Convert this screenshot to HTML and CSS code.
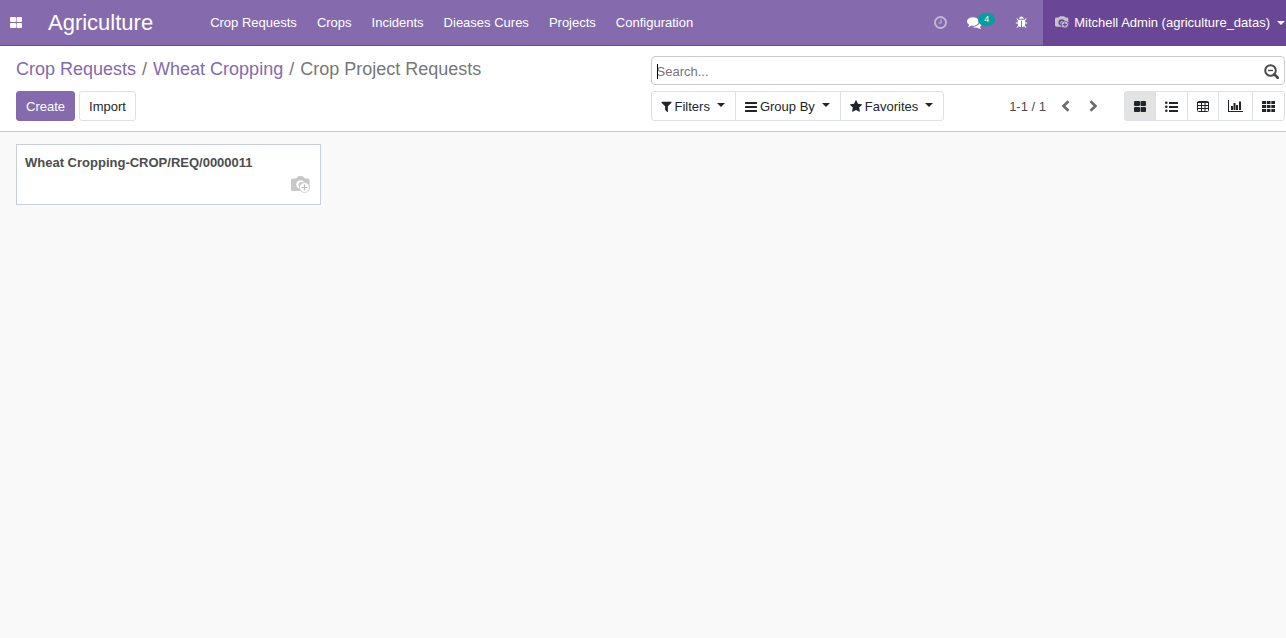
FILE: index.html
```html
<!DOCTYPE html>
<html lang="en">
<head>
<meta charset="utf-8">
<meta name="viewport" content="width=device-width, initial-scale=1">
<title>Crop Project Requests</title>
<link rel="stylesheet" href="styles.css">
</head>
<body>
<header class="navbar">
  <button class="apps" type="button" aria-label="Applications">
    <svg class="icon" width="12" height="11" viewBox="0 0 12 11"><path d="M1 0h4q1 0 1 1v3q0 1-1 1H1Q0 5 0 4V1Q0 0 1 0zM7.500 0H11q1 0 1 1v3q0 1-1 1H7.500q-1 0-1-1V1q0-1 1-1zM1 6h4q1 0 1 1v3q0 1-1 1H1q-1 0-1-1V7q0-1 1-1zM7.500 6H11q1 0 1 1v3q0 1-1 1H7.500q-1 0-1-1V7q0-1 1-1z"/></svg>
  </button>
  <a class="brand" href="#">Agriculture</a>
  <nav class="menu">
    <a href="#">Crop Requests</a>
    <a href="#">Crops</a>
    <a href="#">Incidents</a>
    <a href="#">Dieases Cures</a>
    <a href="#">Projects</a>
    <a href="#">Configuration</a>
  </nav>
  <div class="systray">
    <button class="tray tray-muted" type="button" aria-label="Activities">
      <svg class="icon" width="15" height="15" viewBox="0 0 1792 1792"><path d="M1024 544v448q0 14-9 23t-23 9h-320q-14 0-23-9t-9-23v-64q0-14 9-23t23-9h224v-352q0-14 9-23t23-9h64q14 0 23 9t9 23zm416 352q0-148-73-273t-198-198-273-73-273 73-198 198-73 273 73 273 198 198 273 73 273-73 198-198 73-273zm224 0q0 209-103 385.500t-279.500 279.500-385.500 103-385.500-103-279.500-279.500-103-385.500 103-385.500 279.500-279.500 385.500-103 385.500 103 279.500 279.500 103 385.500z"/></svg>
    </button>
    <button class="tray tray-messages" type="button" aria-label="Messages">
      <svg class="icon" width="15" height="15" viewBox="0 0 1792 1792"><path d="M1408 768q0 139-94 257t-256.500 186.500-353.500 68.500q-86 0-176-16-124 88-278 128-36 9-86 16h-3q-11 0-20.500-8t-11.500-21q-1-3-1-6.500t.5-6.500 2-6l2.500-5 3.500-5.500 4-5 4.500-5 4-4.500q5-6 23-25t26-29.500 22.500-29 25-38.500 20.500-44q-124-72-195-177t-71-224q0-139 94-257t256.500-186.500 353.500-68.500 353.500 68.500 256.500 186.500 94 257zm384 256q0 120-71 224.500t-195 176.500q10 24 20.500 44t25 38.500 22.500 29 26 29.500 23 25q1 1 4 4.500t4.500 5 4 5 3.500 5.500l2.500 5 2 6 .5 6.500-1 6.500q-3 14-13 22t-22 7q-50-7-86-16-154-40-278-128-90 16-176 16-271 0-472-132 58 4 88 4 161 0 309-45t264-129q125-92 192-212t67-254q0-77-23-152 129 71 204 178t75 230z"/></svg>
      <span class="badge">4</span>
    </button>
    <button class="tray" type="button" aria-label="Debug tools">
      <svg class="icon" width="13" height="13" viewBox="0 0 1792 1792"><path d="M1696 960q0 26-19 45t-45 19h-224q0 171-67 290l208 209q19 19 19 45t-19 45q-18 19-45 19t-45-19l-198-197q-5 5-15 13t-42 28.500-65 36.500-82 29-97 13v-896h-128v896q-51 0-101.500-13.500t-87-33-66-39-43.500-32.500l-15-14-183 207q-20 21-48 21-24 0-43-16-19-18-20.500-44.500t15.500-46.500l202-227q-58-114-58-274h-224q-26 0-45-19t-19-45 19-45 45-19h224v-294l-173-173q-19-19-19-45t19-45 45-19 45 19l173 173h844l173-173q19-19 45-19t45 19 19 45-19 45l-173 173v294h224q26 0 45 19t19 45zm-480-576h-640q0-133 93.500-226.500t226.500-93.500 226.500 93.500 93.500 226.500z"/></svg>
    </button>
    <button class="user" type="button">
      <svg class="avatar" width="14" height="13" viewBox="0 0 20 18"><path fill="#c6c2cc" d="M2 2h3l1.500-1.500q.5-.5 2-.5h3q1.500 0 2 .5L15 2h2q2 0 2 2v9q0 2-2 2H2q-2 0-2-2V4q0-2 2-2z"/><circle cx="9.500" cy="9" r="4.500" fill="#6a4796"/><circle cx="10" cy="9.500" r="2.500" fill="#c6c2cc"/><circle cx="14" cy="12" r="5" fill="#c6c2cc" stroke="#6a4796"/><path d="M14 9v6M11 12h6" stroke="#6a4796" stroke-width="1.500"/></svg>
      <span>Mitchell Admin (agriculture_datas)</span>
      <span class="caret"></span>
    </button>
  </div>
</header>

<section class="control-panel">
  <div class="panel-left">
    <nav class="breadcrumb" aria-label="Breadcrumb">
      <a href="#">Crop Requests</a><span class="slash">/</span><a href="#">Wheat Cropping</a><span class="slash">/</span><span>Crop Project Requests</span>
    </nav>
    <div class="actions">
      <button class="btn btn-primary" type="button">Create</button>
      <button class="btn" type="button">Import</button>
    </div>
  </div>
  <div class="panel-right">
    <div class="search">
      <input class="search-input" type="text" placeholder="Search..." aria-label="Search" autofocus>
      <span class="text-cursor"></span>
      <button class="search-toggle" type="button" aria-label="Advanced search">
        <svg width="15" height="15" viewBox="0 0 15 15" fill="none" stroke="currentColor" stroke-width="2"><circle cx="6.500" cy="6.500" r="5.300"/><path d="M10.300 10.300l3.400 3.400" stroke-width="2.700" stroke-linecap="round"/><path d="M4 6.500h5" stroke-width="1.400"/></svg>
      </button>
    </div>
    <div class="tools">
      <div class="group">
        <button class="btn btn-filter" type="button"><svg class="icon" width="11" height="13" viewBox="192 0 1408 1792"><path d="M1595 295q17 41-14 70l-493 493v742q0 42-39 59-13 5-25 5-27 0-45-19l-256-256q-19-19-19-45v-486l-493-493q-31-29-14-70 17-39 59-39h1280q42 0 59 39z"/></svg>Filters<span class="caret"></span></button>
        <button class="btn btn-filter" type="button"><svg class="icon" width="12" height="10" viewBox="0 0 12 10"><path d="M.5 0h11q.5 0 .5.500v1q0 .5-.5.500H.500Q0 2 0 1.500v-1Q0 0 .5 0zM.5 4h11q.5 0 .5.500v1q0 .5-.5.500H.500Q0 6 0 5.500v-1Q0 4 .5 4zM.5 8h11q.5 0 .5.500v1q0 .5-.5.500H.500Q0 10 0 9.500v-1Q0 8 .5 8z"/></svg>Group By<span class="caret"></span></button>
        <button class="btn btn-filter" type="button"><svg class="icon" width="12" height="13" viewBox="64 0 1664 1792"><path d="M1728 647q0 22-26 48l-363 354 86 500q1 7 1 20 0 21-10.500 35.500t-30.500 14.500q-19 0-40-12l-449-236-449 236q-22 12-40 12-21 0-31.500-14.500t-10.500-35.500q0-6 2-20l86-500-364-354q-25-27-25-48 0-37 56-46l502-73 225-455q19-41 49-41t49 41l225 455 502 73q56 9 56 46z"/></svg>Favorites<span class="caret"></span></button>
      </div>
      <div class="view-tools">
        <div class="pager">
          <span>1-1 / 1</span>
          <button class="pager-btn" type="button" aria-label="Previous"><svg width="9" height="12" viewBox="0 0 9 12"><path d="M7.500 1.200L2.500 6l5 4.800"/></svg></button>
          <button class="pager-btn" type="button" aria-label="Next"><svg width="9" height="12" viewBox="0 0 9 12"><path d="M1.500 1.200L6.500 6l-5 4.800"/></svg></button>
        </div>
        <div class="group">
          <button class="btn btn-view active" type="button" aria-label="Kanban"><svg class="icon" width="12" height="11" viewBox="0 0 12 11"><path d="M1 0h4q1 0 1 1v3q0 1-1 1H1Q0 5 0 4V1Q0 0 1 0zM7.500 0H11q1 0 1 1v3q0 1-1 1H7.500q-1 0-1-1V1q0-1 1-1zM1 6h4q1 0 1 1v3q0 1-1 1H1q-1 0-1-1V7q0-1 1-1zM7.500 6H11q1 0 1 1v3q0 1-1 1H7.500q-1 0-1-1V7q0-1 1-1z"/></svg></button>
          <button class="btn btn-view" type="button" aria-label="List"><svg class="icon" width="13" height="11" viewBox="0 0 13 11"><path d="M4 1h9v2H4zM4 5h9v2H4zM4 9h9v2H4z"/><circle cx="1.300" cy="1.700" r="1.300"/><circle cx="1.300" cy="5.700" r="1.300"/><circle cx="1.300" cy="9.700" r="1.300"/></svg></button>
          <button class="btn btn-view" type="button" aria-label="Pivot"><svg width="12" height="11" viewBox="0 0 12 11" fill="none" stroke="currentColor"><rect x=".5" y=".5" width="11" height="10" rx="1"/><path d="M0 1.500h12M0 4.500h12M0 7.500h12M4.500 1v10M8 1v10"/></svg></button>
          <button class="btn btn-view" type="button" aria-label="Graph"><svg class="icon" width="15" height="12" viewBox="0 0 15 12"><path d="M0 0h1v11h14v1H0zM3 6h2v4H3zM5.500 3h2v7h-2zM8 5h2v5H8zM11 1.500h2V10h-2z"/></svg></button>
          <button class="btn btn-view" type="button" aria-label="Cards"><svg class="icon" width="13" height="11" viewBox="0 0 13 11"><path d="M.5 0H4v3H0V.5zM4.800 0h3.700v3H4.800zM9.300 0H13v3H9.300zM0 4h4v3H0zM4.800 4h3.700v3H4.800zM9.300 4H13v3H9.300zM0 8h4v3H0zM4.800 8h3.700v3H4.800zM9.300 8H13v3H9.300z"/></svg></button>
        </div>
      </div>
    </div>
  </div>
</section>

<main class="kanban">
  <article class="card">
    <strong class="card-title">Wheat Cropping-CROP/REQ/0000011</strong>
    <svg class="card-image" width="20" height="18" viewBox="0 0 20 18"><path fill="#c8c8c8" d="M1.500 2.500H5L6.500 1q.8-1 2-1h2q1.200 0 2 1L14 2.500h3q1.500 0 1.500 1.500v9.500q0 1.500-1.500 1.500H1.500Q0 15 0 13.500V4q0-1.500 1.500-1.500z"/><circle cx="9.500" cy="8.500" r="4.200" fill="#fff"/><circle cx="10.500" cy="9" r="3" fill="#c8c8c8"/><circle cx="13.500" cy="11.500" r="5" fill="#fff" stroke="#c8c8c8" stroke-width=".8"/><path d="M13.500 8.500v6M10.500 11.500h6" stroke="#bbb" stroke-width="1.200"/></svg>
  </article>
</main>
</body>
</html>
```
FILE: styles.css
```css
* {
  box-sizing: border-box;
}

body {
  margin: 0;
  min-height: 100vh;
  background: #f9f9f9;
  color: #4c4c4c;
  font: 13px/20px "Liberation Sans", Arial, sans-serif;
}

a {
  color: #8569ae;
  text-decoration: none;
}

button {
  padding: 0;
  border: 0;
  background: none;
  color: inherit;
  font: inherit;
  cursor: pointer;
}

svg {
  display: block;
  flex: none;
}

.icon {
  fill: currentColor;
}

.caret {
  border: 4px solid transparent;
  border-top-color: currentColor;
  border-bottom: 0;
}

.navbar {
  display: flex;
  align-items: stretch;
  height: 46px;
  border-bottom: 1px solid #6a4796;
  background: #856bae;
  color: #fff;
}

.navbar a {
  color: #fff;
}

.apps {
  padding: 0 10px 1px;
}

.brand {
  align-self: center;
  margin: 0 47px 0 16px;
  font-size: 22px;
  line-height: 30px;
}

.menu {
  display: flex;
  align-items: center;
}

.menu a {
  padding: 0 10px;
}

.systray {
  display: flex;
  margin-left: auto;
}

.tray {
  display: flex;
  align-items: center;
  padding: 0 15px 0 12px;
}

.tray-muted {
  padding: 0 11px 0 12px;
  opacity: 0.5;
}

.tray-messages {
  padding: 0 8px;
}

.badge {
  margin: -6px 0 0 -4px;
  padding: 0 6px;
  border-radius: 7px;
  background: #00a09d;
  font-size: 9px;
  line-height: 13px;
}

.user {
  display: flex;
  align-items: center;
  gap: 5px;
  margin-bottom: -1px;
  padding: 0 1px 1px 12px;
  background: #6a4796;
}

.user .caret {
  margin-left: 2px;
}

.control-panel {
  display: grid;
  grid-template-columns: 1fr 1fr;
  padding: 10px 1px 10px 16px;
  border-bottom: 1px solid #ccc;
  background: #fff;
}

.panel-left,
.panel-right {
  display: flex;
  flex-direction: column;
  gap: 6px;
}

.breadcrumb {
  height: 29px;
  color: #777;
  font-size: 18px;
  line-height: 26px;
}

.slash {
  padding: 0 6px;
}

.actions {
  display: flex;
  gap: 4px;
}

.btn {
  display: flex;
  align-items: center;
  justify-content: center;
  height: 30px;
  padding: 1px 9px 0;
  border: 1px solid #dee0e8;
  border-radius: 3px;
  background: #fff;
  color: #212529;
}

.btn-primary {
  border-color: #856bae;
  background: #856bae;
  color: #fff;
}

.search {
  position: relative;
  display: flex;
  height: 29px;
  border: 1px solid #ccc;
  border-radius: 4px;
}

.search-input {
  flex: 1;
  min-width: 0;
  padding: 2px 5px 0;
  border: 0;
  outline: 0;
  background: transparent;
  color: #4c4c4c;
  caret-color: transparent;
  font: inherit;
}

.search-input::placeholder {
  color: #757575;
}

.text-cursor {
  position: absolute;
  top: 7px;
  left: 5px;
  width: 1px;
  height: 15px;
  background: #000;
}

.search-toggle {
  padding: 2px 5px 0;
}

.tools,
.view-tools,
.group,
.pager {
  display: flex;
  align-items: center;
}

.tools {
  justify-content: space-between;
}

.group .btn + .btn {
  margin-left: -1px;
}

.group .btn:not(:first-child) {
  border-top-left-radius: 0;
  border-bottom-left-radius: 0;
}

.group .btn:not(:last-child) {
  border-top-right-radius: 0;
  border-bottom-right-radius: 0;
}

.btn-filter {
  gap: 3px;
}

.btn-filter .caret {
  margin: 0 1px 3px 4px;
}

.btn-view {
  padding-top: 0;
}

.btn-view.active {
  background: #e3e3e3;
}

.view-tools {
  gap: 21px;
}

.pager {
  color: #4c4c4c;
}

.pager-btn {
  padding: 4px 5px;
}

.pager span {
  padding-top: 1px;
  margin-right: 10px;
}

.pager-btn + .pager-btn {
  margin-left: 9px;
}

.pager-btn svg {
  fill: none;
  stroke: #6c6c70;
  stroke-width: 2.600;
}

.kanban {
  display: grid;
  grid-template-columns: repeat(auto-fill, minmax(300px, 305px));
  gap: 16px;
  padding: 12px 16px;
}

.card {
  display: flex;
  flex-direction: column;
  padding: 8px 8px 10px;
  border: 1px solid #cacdda;
  background: #fff;
}

.card-title {
  line-height: 20px;
}

.card-image {
  align-self: flex-end;
  margin: 3px 1px 0 0;
}
```
